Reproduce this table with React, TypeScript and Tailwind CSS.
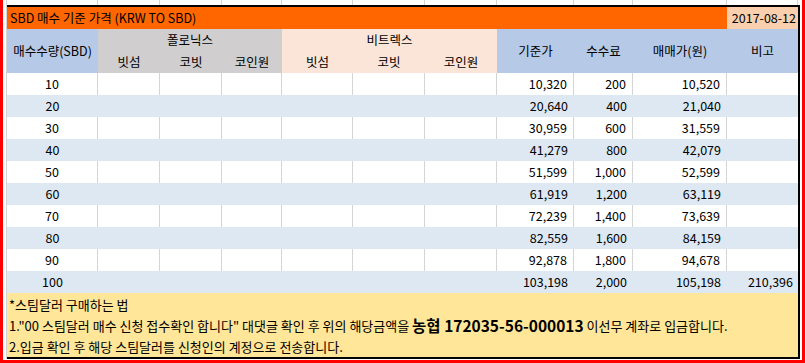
import React from 'react';

const GRID =
  'grid grid-cols-[91px_62px_62px_60px_71px_72px_72px_77px_59px_94px_71px]';

const gutterWidths = ['w-[91px]', 'w-[62px]', 'w-[62px]', 'w-[60px]', 'w-[71px]', 'w-[72px]', 'w-[72px]', 'w-[77px]', 'w-[59px]', 'w-[94px]', 'w-[71px]'];

interface Row {
  qty: string;
  base: string;
  fee: string;
  total: string;
  note?: string;
}

const rows: Row[] = [
  { qty: '10', base: '10,320', fee: '200', total: '10,520' },
  { qty: '20', base: '20,640', fee: '400', total: '21,040' },
  { qty: '30', base: '30,959', fee: '600', total: '31,559' },
  { qty: '40', base: '41,279', fee: '800', total: '42,079' },
  { qty: '50', base: '51,599', fee: '1,000', total: '52,599' },
  { qty: '60', base: '61,919', fee: '1,200', total: '63,119' },
  { qty: '70', base: '72,239', fee: '1,400', total: '73,639' },
  { qty: '80', base: '82,559', fee: '1,600', total: '84,159' },
  { qty: '90', base: '92,878', fee: '1,800', total: '94,678' },
  { qty: '100', base: '103,198', fee: '2,000', total: '105,198', note: '210,396' },
];

function DataRow({ row, shaded }: { row: Row; shaded: boolean }) {
  // filled rows hide the sheet gridlines, white rows show them
  const line = shaded ? '' : 'border-r border-[#d4d4d4]';
  const cell = `flex h-[22px] items-center ${line}`;
  const num = `${cell} justify-end pr-[6px]`;
  return (
    <div className={`${GRID} ${shaded ? 'bg-[#dde8f3]' : 'bg-white'}`}>
      <div className={`${cell} justify-center`}>{row.qty}</div>
      <div className={cell} />
      <div className={cell} />
      <div className={cell} />
      <div className={cell} />
      <div className={cell} />
      <div className={cell} />
      <div className={num}>{row.base}</div>
      <div className={num}>{row.fee}</div>
      <div className={num}>{row.total}</div>
      <div className={`flex h-[22px] items-center justify-end pr-[5px]`}>{row.note}</div>
    </div>
  );
}

export default function App() {
  return (
    <div className="flex h-[363px] w-[805px] flex-col border-x-[3px] border-b-[3px] border-[#ff0000] bg-white font-['Noto_Sans_CJK_KR',sans-serif] text-[12.5px] leading-none text-black">
      {/* sheet gridlines above the table */}
      <div className="flex h-[5px]">
        <div className="w-[4px] border-r border-[#d4d4d4]" />
        {gutterWidths.map((w, i) => (
          <div key={i} className={`${w} border-r border-[#d4d4d4]`} />
        ))}
      </div>

      <div className="flex">
        <div className="w-[4px] border-r border-[#d4d4d4]" />

        <div className="w-[793px] border-y-2 border-r-2 border-black">
          {/* title */}
          <div className="flex h-[22px]">
            <div className="flex w-[720px] items-center bg-[#ff6600] pl-[3px]">
              SBD 매수 기준 가격 (KRW TO SBD)
            </div>
            <div className="flex w-[71px] items-center justify-end bg-[#f9cfae] pr-[2px]">
              2017-08-12
            </div>
          </div>

          {/* header */}
          <div className={`${GRID} grid-rows-[22px_22px]`}>
            <div className="row-span-2 flex items-center justify-center bg-[#b6c9e6]">
              매수수량(SBD)
            </div>
            <div className="col-span-3 flex items-center justify-center bg-[#d0cece] pt-[1px]">
              폴로닉스
            </div>
            <div className="col-span-3 flex items-center justify-center bg-[#fbe5d8] pt-[1px]">
              비트렉스
            </div>
            <div className="row-span-2 flex items-center justify-center bg-[#b6c9e6]">기준가</div>
            <div className="row-span-2 flex items-center justify-center bg-[#b6c9e6]">수수료</div>
            <div className="row-span-2 flex items-center justify-center bg-[#b6c9e6]">매매가(원)</div>
            <div className="row-span-2 flex items-center justify-center bg-[#b6c9e6]">비고</div>
            <div className="flex items-center justify-center bg-[#d0cece]">빗섬</div>
            <div className="flex items-center justify-center bg-[#d0cece]">코빗</div>
            <div className="flex items-center justify-center bg-[#d0cece]">코인원</div>
            <div className="flex items-center justify-center bg-[#fbe5d8]">빗섬</div>
            <div className="flex items-center justify-center bg-[#fbe5d8]">코빗</div>
            <div className="flex items-center justify-center bg-[#fbe5d8]">코인원</div>
          </div>

          {rows.map((row, i) => (
            <DataRow key={row.qty} row={row} shaded={i % 2 === 1} />
          ))}

          {/* how to buy */}
          <div className="flex h-[64px] flex-col justify-around bg-[#ffe699] pl-[2px] pt-[1px] text-[13px]">
            <div>*스팀달러 구매하는 법</div>
            <div className="flex items-center">
              1."00 스팀달러 매수 신청 접수확인 합니다" 대댓글 확인 후 위의 해당금액을&nbsp;
              <b className="text-[15.5px]">농협 172035-56-000013</b>&nbsp;이선무 계좌로 입금합니다.
            </div>
            <div>2.입금 확인 후 해당 스팀달러를 신청인의 계정으로 전송합니다.</div>
          </div>
        </div>

        <div className="w-[2px]" />
      </div>
    </div>
  );
}
